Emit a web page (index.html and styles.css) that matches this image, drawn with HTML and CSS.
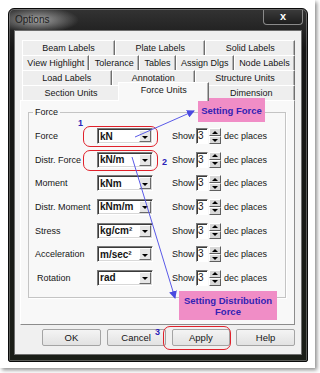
FILE: index.html
```html
<!DOCTYPE html>
<html lang="en">
  <head>
    <meta charset="UTF-8" />
    <title>Options</title>
    <link rel="stylesheet" href="styles.css">
  </head>
  <body>
    <div class="shot">
      <div class="window">
        <div class="titlebar">
          <span class="title">Options</span>
          <span class="close">x</span>
        </div>

        <div class="client">
          <div class="tabs">
            <div class="tabrow">
              <span class="tab">Beam Labels</span>
              <span class="tab">Plate Labels</span>
              <span class="tab">Solid Labels</span>
            </div>
            <div class="tabrow">
              <span class="tab">View Highlight</span>
              <span class="tab">Tolerance</span>
              <span class="tab">Tables</span>
              <span class="tab">Assign Dlgs</span>
              <span class="tab">Node Labels</span>
            </div>
            <div class="tabrow">
              <span class="tab">Load Labels</span>
              <span class="tab">Annotation</span>
              <span class="tab">Structure Units</span>
            </div>
            <div class="tabrow">
              <span class="tab">Section Units</span>
              <span class="tab active">Force Units</span>
              <span class="tab">Dimension</span>
            </div>
          </div>

          <div class="panel">
            <div class="group">
              <div class="legend">Force</div>
              <div class="rows">
                <div class="row">
                  <span class="label">Force</span>
                  <span class="combo"><b>kN</b><i class="drop"></i></span>
                  <span class="show">Show</span>
                  <span class="spin-field">3</span>
                  <span class="spin"><i class="up"></i><i class="down"></i></span>
                  <span class="dec">dec places</span>
                </div>
                <div class="row">
                  <span class="label">Distr. Force</span>
                  <span class="combo"><b>kN/m</b><i class="drop"></i></span>
                  <span class="show">Show</span>
                  <span class="spin-field">3</span>
                  <span class="spin"><i class="up"></i><i class="down"></i></span>
                  <span class="dec">dec places</span>
                </div>
                <div class="row">
                  <span class="label">Moment</span>
                  <span class="combo"><b>kNm</b><i class="drop"></i></span>
                  <span class="show">Show</span>
                  <span class="spin-field">3</span>
                  <span class="spin"><i class="up"></i><i class="down"></i></span>
                  <span class="dec">dec places</span>
                </div>
                <div class="row">
                  <span class="label">Distr. Moment</span>
                  <span class="combo"><b>kNm/m</b><i class="drop"></i></span>
                  <span class="show">Show</span>
                  <span class="spin-field">3</span>
                  <span class="spin"><i class="up"></i><i class="down"></i></span>
                  <span class="dec">dec places</span>
                </div>
                <div class="row">
                  <span class="label">Stress</span>
                  <span class="combo"><b>kg/cm²</b><i class="drop"></i></span>
                  <span class="show">Show</span>
                  <span class="spin-field">3</span>
                  <span class="spin"><i class="up"></i><i class="down"></i></span>
                  <span class="dec">dec places</span>
                </div>
                <div class="row">
                  <span class="label">Acceleration</span>
                  <span class="combo"><b>m/sec²</b><i class="drop"></i></span>
                  <span class="show">Show</span>
                  <span class="spin-field">3</span>
                  <span class="spin"><i class="up"></i><i class="down"></i></span>
                  <span class="dec">dec places</span>
                </div>
                <div class="row">
                  <span class="label indent">Rotation</span>
                  <span class="combo"><b>rad</b><i class="drop"></i></span>
                  <span class="show">Show</span>
                  <span class="spin-field">3</span>
                  <span class="spin"><i class="up"></i><i class="down"></i></span>
                  <span class="dec">dec places</span>
                </div>
              </div>
            </div>
          </div>

          <div class="buttons">
            <button>OK</button>
            <button>Cancel</button>
            <button>Apply</button>
            <button>Help</button>
          </div>
        </div>
      </div>

      <!-- annotations drawn over the dialog -->
      <span class="ring ring-tab"></span>
      <span class="ring ring-force"></span>
      <span class="ring ring-distr"></span>
      <span class="ring ring-apply"></span>

      <span class="num num-1">1</span>
      <span class="num num-2">2</span>
      <span class="num num-3">3</span>

      <div class="note note-force">Setting Force</div>
      <div class="note note-distr">Setting Distribution<br>Force</div>

      <svg class="arrows" width="320" height="373" viewBox="0 0 320 373">
        <defs>
          <marker id="head" markerWidth="8" markerHeight="8" refX="7" refY="4" orient="auto" markerUnits="userSpaceOnUse">
            <path d="M0,0 L8,4 L0,8 z" fill="#4a4ae0"/>
          </marker>
        </defs>
        <line x1="135" y1="137" x2="194" y2="111" stroke="#5a5ae8" stroke-width="1" marker-end="url(#head)"/>
        <line x1="132" y1="157" x2="175" y2="298" stroke="#5a5ae8" stroke-width="1" marker-end="url(#head)"/>
      </svg>
    </div>
  </body>
</html>
```

FILE: styles.css
```css
* {
  box-sizing: border-box;
}

body {
  margin: 0;
  width: 320px;
  height: 373px;
  overflow: hidden;
  background: #fff;
  font-family: "Liberation Sans", Arial, sans-serif;
  font-size: 9px;
  color: #151515;
}

.shot {
  position: relative;
  width: 315px;
  height: 368px;
  padding: 8px 0 0 8px;
  background: #fff;
  box-shadow: 2px 2px 4px rgba(0,0,0,.45);
}

/* dark window frame */
.window {
  width: 300px;
  height: 354px;
  padding: 0 5px 6px;
  border: 1px solid #0a0a0a;
  border-radius: 6px 6px 2px 2px;
  background: linear-gradient(#333, #151515 40px, #1b1e18);
  box-shadow: inset 0 0 0 1px rgba(255,255,255,.28);
}

.titlebar {
  display: flex;
  justify-content: space-between;
  align-items: center;
  height: 21px;
  margin: 0 -5px;
  padding: 0 4px 0 6px;
  border-radius: 5px 5px 0 0;
  background: radial-gradient(ellipse 42px 13px at 28px 11px, #a4a4a4, rgba(110,110,110,0));
}

.title {
  font-size: 10px;
  color: #1c1c1c;
}

.close {
  align-self: flex-start;
  width: 40px;
  height: 15px;
  margin-top: 1px;
  border: 1px solid #8a8a8a;
  border-top: none;
  border-radius: 0 0 4px 4px;
  background: linear-gradient(#3a3a3a, #1e1e1e);
  color: #fff;
  font: bold 11px/13px "Liberation Sans", Arial, sans-serif;
  text-align: center;
}

.client {
  height: 325px;
  padding: 9px 6px 0 5px;
  border: 1px solid #6e6e6e;
  background: #f0f0f0;
}

/* multi row tabs */
.tabs {
  margin-left: 2px;
}

.tabrow {
  display: flex;
  height: 15px;
}

.tab {
  flex: 1 1 auto;
  height: 15px;
  padding: 0 3px;
  border-top: 1px solid #fff;
  border-left: 1px solid #fff;
  border-right: 1px solid #6f6f6f;
  box-shadow: inset -1px 0 0 #b4b4b4;
  background: #eeeeee;
  text-align: center;
  line-height: 14px;
  white-space: nowrap;
}

.tab.active {
  position: relative;
  z-index: 2;
  height: 19px;
  margin: -3px -2px 0;
  background: #f8f8f8;
}

.panel {
  height: 225px;
  padding: 0 0 0 7px;
  border: 1px solid #8c8c8c;
  border-top-color: #fff;
  border-left-color: #fff;
  background: #f8f8f8;
}

.group {
  width: 258px;
  margin-top: 11px;
  padding: 0 6px 11px;
  border: 1px solid #c4c4c4;
  box-shadow: 1px 1px 0 #fff;
}

.legend {
  width: fit-content;
  margin: -6px 0 10px -2px;
  padding: 0 2px;
  line-height: 11px;
  background: #f8f8f8;
}

.rows {
  display: flex;
  flex-direction: column;
  gap: 7.66px;
}

.row {
  display: flex;
  align-items: center;
  height: 16px;
}

.label {
  width: 62px;
}

.label.indent {
  padding-left: 2px;
}

.combo {
  display: flex;
  align-items: center;
  width: 56px;
  height: 16px;
  padding: 0 1px 0 2px;
  border: 1px solid;
  border-color: #7a7a7a #fff #fff #7a7a7a;
  box-shadow: inset 1px 1px 0 #3a3a3a, inset -1px -1px 0 #d8d8d8;
  background: #fff;
  font-size: 10px;
}

.drop {
  display: flex;
  align-items: center;
  justify-content: center;
  width: 12px;
  height: 12px;
  margin-left: auto;
  border: 1px solid;
  border-color: #fff #6a6a6a #6a6a6a #fff;
  background: #e6e6e6;
}

.drop::after {
  content: "";
  margin-top: 2px;
  border-left: 3px solid transparent;
  border-right: 3px solid transparent;
  border-top: 3px solid #000;
}

.show {
  width: 24px;
  margin-left: 19px;
}

.spin-field {
  width: 12px;
  height: 16px;
  padding-left: 1px;
  border: 1px solid;
  border-color: #7a7a7a #fff #fff #7a7a7a;
  box-shadow: inset 1px 1px 0 #3a3a3a;
  background: #fff;
  font-size: 10px;
  line-height: 14px;
}

.spin {
  display: flex;
  flex-direction: column;
  width: 12px;
  height: 16px;
  margin-left: 1px;
}

.spin i {
  display: flex;
  align-items: center;
  justify-content: center;
  height: 8px;
  border: 1px solid;
  border-color: #fff #5e5e5e #5e5e5e #fff;
  background: #d8d8d8;
}

.spin .up::after {
  content: "";
  border-left: 3px solid transparent;
  border-right: 3px solid transparent;
  border-bottom: 3px solid #000;
}

.spin .down::after {
  content: "";
  border-left: 3px solid transparent;
  border-right: 3px solid transparent;
  border-top: 3px solid #000;
}

.dec {
  margin-left: 3px;
}

.buttons {
  display: flex;
  gap: 6px;
  padding: 4px 0 0 22px;
}

.buttons button {
  width: 60px;
  height: 17px;
  padding: 0;
  border: 1px solid #a4a4a4;
  border-radius: 2px;
  background: linear-gradient(#f4f4f4, #e2e2e2);
  font: 9.5px "Liberation Sans", Arial, sans-serif;
  color: #151515;
}

/* red rings, numbers and notes over the screenshot */
.ring {
  position: absolute;
  border: 1.5px solid #e0212b;
  border-radius: 7px;
}

.ring-tab {
  left: 124px;
  top: 82px;
  width: 79px;
  height: 17px;
}

.ring-force {
  left: 83px;
  top: 126px;
  width: 75px;
  height: 21px;
}

.ring-distr {
  left: 83px;
  top: 150px;
  width: 75px;
  height: 21px;
}

.ring-apply {
  left: 163px;
  top: 326px;
  width: 68px;
  height: 24px;
}

.num {
  position: absolute;
  color: #2a22b8;
  font: bold 9px "Liberation Sans", Arial, sans-serif;
}

.num-1 { left: 78px; top: 118px; }
.num-2 { left: 162px; top: 157px; }
.num-3 { left: 155px; top: 327px; }

.note {
  position: absolute;
  display: flex;
  align-items: center;
  justify-content: center;
  background: #f08dc6;
  color: #3322b4;
  font: bold 9.5px/11px "Liberation Sans", Arial, sans-serif;
  text-align: center;
}

.note-force {
  left: 198px;
  top: 98px;
  width: 67px;
  height: 24px;
}

.note-distr {
  left: 179px;
  top: 291px;
  width: 98px;
  height: 29px;
}

.arrows {
  position: absolute;
  left: 0;
  top: 0;
  pointer-events: none;
}
```
